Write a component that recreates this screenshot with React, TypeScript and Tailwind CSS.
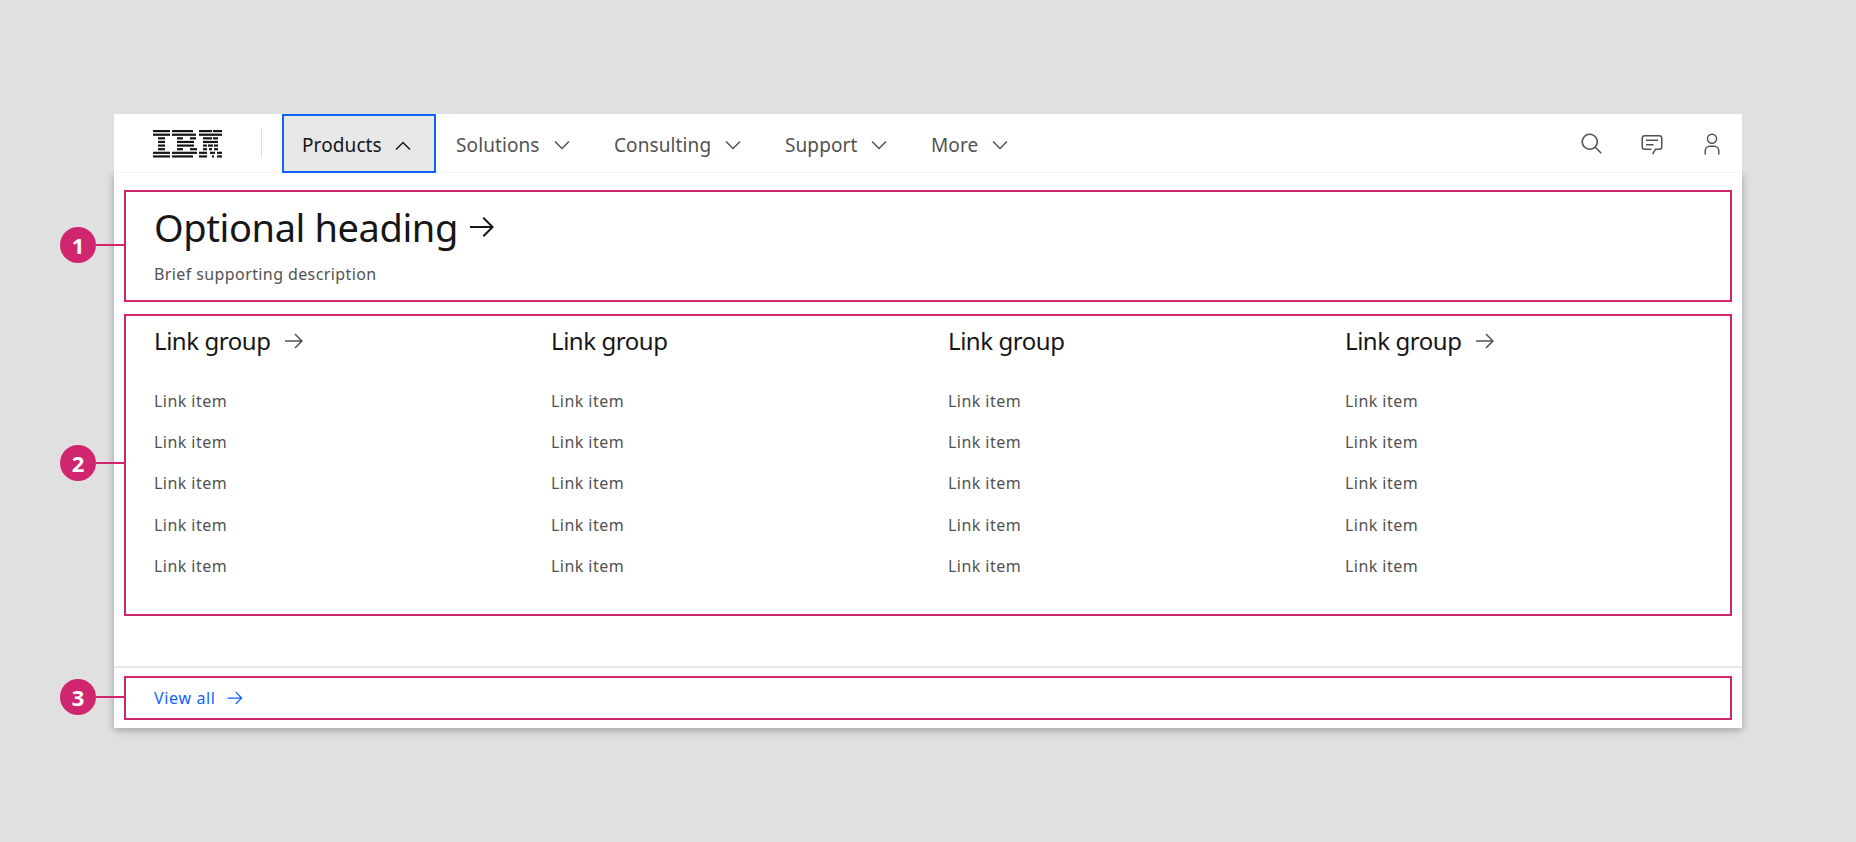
import type { ReactNode } from "react";

const arrowRight = "M18 6 16.57 7.393 24.15 15 4 15 4 17 24.15 17 16.57 24.573 18 26 28 16 18 6z";
const chevronDown = "M16 22 6 12 7.4 10.6 16 19.2 24.6 10.6 26 12z";
const chevronUp = "M16 10 26 20 24.6 21.4 16 12.8 7.4 21.4 6 20z";

function Icon({ d, className, children }: { d?: string; className?: string; children?: ReactNode }) {
  return (
    <svg viewBox="0 0 32 32" fill="currentColor" className={className}>
      {d && <path d={d} />}
      {children}
    </svg>
  );
}

// 8-bar logo, [x, width] per stripe
const logoRows: number[][][] = [
  [[0, 17], [19, 21], [46, 13], [60, 9]],
  [[0, 17], [19, 24], [46, 14], [59, 10]],
  [[5, 7], [24, 6], [37, 6], [50, 9], [60, 5]],
  [[5, 7], [24, 17], [50, 15]],
  [[5, 7], [24, 17], [50, 4], [55, 5], [61, 4]],
  [[5, 7], [24, 6], [37, 7], [50, 4], [56, 3], [61, 4]],
  [[0, 17], [19, 25], [46, 8], [57, 5], [64, 5]],
  [[0, 17], [19, 21], [46, 8], [59, 2], [64, 5]],
];

function IbmLogo() {
  return (
    <svg viewBox="0 0 69 28" className="w-[69px] h-[28px] text-[#161616]" fill="currentColor">
      {logoRows.map((row, i) =>
        row.map(([x, w]) => <rect key={`${i}-${x}`} x={x} y={i * 3.62} width={w} height={2.2} />)
      )}
    </svg>
  );
}

const navItems = [
  { label: "Solutions", width: "w-[158px]" },
  { label: "Consulting", width: "w-[171px]" },
  { label: "Support", width: "w-[146px]" },
  { label: "More", width: "w-[130px]" },
];

const groups = [
  { hasArrow: true, width: "w-[397px]" },
  { hasArrow: false, width: "w-[397px]" },
  { hasArrow: false, width: "w-[397px]" },
  { hasArrow: true, width: "w-[300px]" },
];

const items = ["Link item", "Link item", "Link item", "Link item", "Link item"];

function Badge({ n, className }: { n: number; className: string }) {
  return (
    <div className={`absolute left-[60px] flex items-center ${className}`}>
      <div className="w-9 h-9 rounded-full bg-[#d02670] text-white font-bold text-[22px] flex items-center justify-center">
        {n}
      </div>
      <div className="w-[28px] h-[2px] bg-[#d02670]" />
    </div>
  );
}

export default function App() {
  return (
    <div className="relative min-h-screen bg-[#e0e0e0] pt-[114px] pl-[114px] font-['Noto_Sans',sans-serif] overflow-hidden">
      <Badge n={1} className="top-[227px]" />
      <Badge n={2} className="top-[445px]" />
      <Badge n={3} className="top-[679px]" />

      <div className="w-[1628px]">
        {/* Header */}
        <div className="relative z-10 h-[59px] bg-white border-b border-[#f4f4f4] flex items-stretch">
          <div className="w-[39px]" />
          <div className="pt-[2px] flex items-center">
            <IbmLogo />
          </div>
          <div className="w-[60px] pl-[39px] flex items-center">
            <div className="w-px h-[30px] bg-[#e0e0e0]" />
          </div>
          <div className="relative -mb-px w-[154px] h-[59px] pl-[18px] pt-[4px] border-2 border-[#0f62fe] bg-[#e8e8e8] text-[#161616] flex items-center">
            <span className="text-[19px] tracking-[0.1px] w-[89px]">Products</span>
            <Icon d={chevronUp} className="w-6 h-6" />
          </div>
          {navItems.map((item) => (
            <div key={item.label} className={`${item.width} pl-5 pt-[4px] flex items-center text-[#525252]`}>
              <span className="text-[19px] tracking-[0.1px]">{item.label}</span>
              <Icon d={chevronDown} className="w-6 h-6 ml-[10px]" />
            </div>
          ))}
          <div className="ml-auto pt-[1px] flex items-stretch text-[#525252]">
            <div className="w-[60px] flex items-center justify-center">
              <Icon d="M29,27.5859l-7.5521-7.5521a11.0177,11.0177,0,1,0-1.4141,1.4141L27.5859,29ZM4,13a9,9,0,1,1,9,9A9.01,9.01,0,0,1,4,13Z" className="w-6 h-6" />
            </div>
            <div className="w-[60px] flex items-center justify-center">
              <Icon d="M17.74,30,16,29l4-7h6a2,2,0,0,0,2-2V8a2,2,0,0,0-2-2H6A2,2,0,0,0,4,8V20a2,2,0,0,0,2,2h9v2H6a4,4,0,0,1-4-4V8A4,4,0,0,1,6,4H26a4,4,0,0,1,4,4V20a4,4,0,0,1-4,4H21.16Z" className="w-6 h-6">
                <rect x="8" y="10" width="16" height="2" />
                <rect x="8" y="16" width="10" height="2" />
              </Icon>
            </div>
            <div className="w-[60px] flex items-center justify-center">
              <Icon d="M16,4a5,5,0,1,1-5,5,5,5,0,0,1,5-5m0-2a7,7,0,1,0,7,7A7,7,0,0,0,16,2Z" className="w-6 h-6">
                <path d="M26,30H24V25a5,5,0,0,0-5-5H13a5,5,0,0,0-5,5v5H6V25a7,7,0,0,1,7-7h6a7,7,0,0,1,7,7Z" />
              </Icon>
            </div>
          </div>
        </div>

        {/* Panel */}
        <div className="bg-white shadow-[0_2px_8px_rgba(0,0,0,0.3)] px-[10px] pt-[17px] pb-2">
          <div className="h-[112px] border-2 border-[#d02670] pl-[28px] pt-[13px]">
            <div className="flex items-center text-[#161616]">
              <span className="text-[38px] leading-[44px] tracking-[-0.4px]">Optional heading</span>
              <Icon d={arrowRight} className="w-8 h-8 ml-[8px]" />
            </div>
            <p className="mt-[13px] text-[16px] leading-[24px] tracking-[0.4px] text-[#525252]">Brief supporting description</p>
          </div>

          <div className="mt-3 h-[302px] border-2 border-[#d02670] pl-[28px] pt-[9px] flex">
            {groups.map((group, i) => (
              <div key={i} className={group.width}>
                <div className="h-[32px] flex items-center text-[#161616]">
                  <span className="text-[24px] tracking-[-0.45px]">Link group</span>
                  {group.hasArrow && <Icon d={arrowRight} className="w-6 h-6 ml-3 text-[#525252]" />}
                </div>
                <ul className="mt-[23px]">
                  {items.map((item, j) => (
                    <li key={j} className="h-[41.4px] flex items-center text-[16px] tracking-[0.45px] text-[#525252]">
                      {item}
                    </li>
                  ))}
                </ul>
              </div>
            ))}
          </div>

          <div className="-mx-[10px] mt-[50px] h-[2px] bg-[#e8e8e8]" />

          <div className="mt-2 h-[44px] border-2 border-[#d02670] pl-[28px] flex items-center text-[#0f62fe]">
            <span className="text-[16px] tracking-[0.65px]">View all</span>
            <Icon d={arrowRight} className="w-5 h-5 ml-[9px]" />
          </div>
        </div>
      </div>
    </div>
  );
}
